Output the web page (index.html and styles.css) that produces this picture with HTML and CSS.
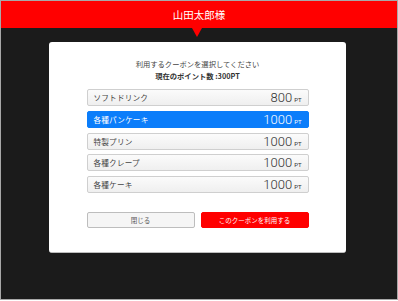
FILE: index.html
```html
<!DOCTYPE html>
<html lang="ja">
<head>
<meta charset="utf-8">
<link rel="stylesheet" href="styles.css">
</head>
<body>
<div class="frame">
  <header class="header">山田太郎様</header>
  <main class="stage">
    <section class="modal">
      <p class="title">利用するクーポンを選択してください</p>
      <p class="points">現在のポイント数 :300PT</p>
      <ul class="list">
        <li class="item"><span class="name">ソフトドリンク</span><span class="price">800<small>PT</small></span></li>
        <li class="item selected"><span class="name">各種パンケーキ</span><span class="price">1000<small>PT</small></span></li>
        <li class="item"><span class="name">特製プリン</span><span class="price">1000<small>PT</small></span></li>
        <li class="item"><span class="name">各種クレープ</span><span class="price">1000<small>PT</small></span></li>
        <li class="item"><span class="name">各種ケーキ</span><span class="price">1000<small>PT</small></span></li>
      </ul>
      <div class="actions">
        <button class="btn btn-close">閉じる</button>
        <button class="btn btn-use">このクーポンを利用する</button>
      </div>
    </section>
  </main>
</div>
</body>
</html>
```
FILE: styles.css
```css
* { box-sizing: border-box; }
html, body { margin: 0; padding: 0; background: #fff; }
body { font-family: "Noto Sans CJK JP", "Noto Sans", sans-serif; }
.frame {
  width: 398px;
  height: 300px;
  border: 1px solid #a8a8a8;
  display: flex;
  flex-direction: column;
  background: #1b1b1b;
}
.header {
  position: relative;
  height: 27px;
  background: #ff0000;
  color: #fff;
  font-size: 10.5px;
  line-height: 27px;
  text-align: center;
  flex: none;
}
.header::after {
  content: "";
  position: absolute;
  left: 191px;
  top: 27px;
  border-left: 5px solid transparent;
  border-right: 5px solid transparent;
  border-top: 9px solid #ff0000;
}
.stage {
  flex: 1;
  padding: 14px 0 0 48px;
}
.modal {
  width: 297px;
  height: 211px;
  background: #fff;
  border-radius: 3px;
  border-bottom: 1px solid #bdbdbd;
  padding-top: 16px;
}
.title {
  margin: 0;
  font-size: 7.3px;
  line-height: 12px;
  color: #444;
  text-align: center;
}
.points {
  margin: 0;
  font-size: 7.3px;
  line-height: 12px;
  font-weight: 700;
  color: #333;
  text-align: center;
}
.list {
  list-style: none;
  margin: 7px auto 0;
  padding: 0;
  width: 222px;
  display: flex;
  flex-direction: column;
  gap: 4.75px;
}
.item {
  height: 17px;
  border: 1px solid #cfcfcf;
  border-radius: 2px;
  background: linear-gradient(#fbfbfb, #efefef);
  display: flex;
  align-items: center;
  justify-content: space-between;
  padding: 0 6px 0 6px;
  color: #444;
}
.item.selected {
  background: #0b7dfa;
  border-color: #0b7dfa;
  color: #fff;
}
.name {
  font-size: 7.6px;
  letter-spacing: 0.2px;
}
.price {
  font-family: Roboto, "Liberation Sans", sans-serif;
  font-size: 13px;
  font-weight: 300;
  line-height: 1;
  display: flex;
  align-items: baseline;
  color: #333;
}
.item.selected .price { color: #fff; }
.price small {
  font-size: 6px;
  margin-left: 2px;
  font-weight: 400;
}
.actions {
  display: flex;
  justify-content: center;
  gap: 6px;
  margin-top: 19px;
}
.btn {
  width: 108px;
  height: 16px;
  border-radius: 2px;
  font-family: inherit;
  font-size: 6.5px;
  padding: 0;
  cursor: pointer;
}
.btn-close {
  background: #f5f5f5;
  border: 1px solid #bdbdbd;
  color: #555;
}
.btn-use {
  background: #ff0000;
  border: 1px solid #ff0000;
  color: #fff;
}
```
